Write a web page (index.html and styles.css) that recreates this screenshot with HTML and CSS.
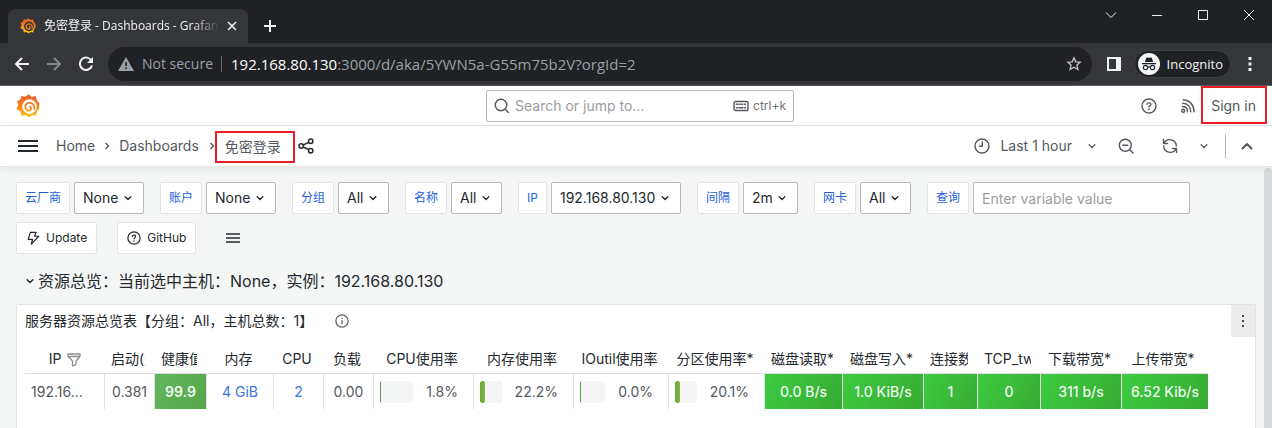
FILE: index.html
```html
<!DOCTYPE html>
<html lang="zh-CN">
<head>
<meta charset="utf-8">
<meta name="viewport" content="width=device-width, initial-scale=1">
<title>免密登录 - Dashboards - Grafana</title>
<link rel="stylesheet" href="styles.css">
</head>
<body>
<svg class="defs" aria-hidden="true">
  <defs>
    <linearGradient id="flame" x1="0" y1="0" x2="0" y2="1">
      <stop offset="0" stop-color="#f05a28"/><stop offset="0.45" stop-color="#f47b20"/><stop offset="1" stop-color="#fbca0a"/>
    </linearGradient>
    <linearGradient id="flame-curl" gradientUnits="userSpaceOnUse" x1="0" y1="4" x2="0" y2="22">
      <stop offset="0" stop-color="#f05a28"/><stop offset="1" stop-color="#fbb614"/>
    </linearGradient>
  </defs>
  <symbol id="gear" viewBox="0 0 24 24">
    <path fill="url(#flame)" d="M12.8.2 15.600 3l4.200-.9.9 4.200 2.700 3-.2 2.500-.2 3-2.200 2.500-.9 4.300-3.900-.5-3.200 2.300-3-2.400-4.100.9-.9-4.100L.3 14.900 2.400 11 .9 7.200 4.500 5.600 5.300 2 9.300 2.700z"/>
  </symbol>
  <symbol id="curl" viewBox="0 0 24 24">
    <path fill="none" stroke="url(#flame-curl)" stroke-width="1.800" stroke-linecap="round" d="M18.300 15.200C19 11.800 16.900 8.800 13.600 8.700 10.900 8.700 9.200 10.800 9.300 13c.2 2.700 2.400 4 4.200 3.600 2-.5 2.400-3.200.5-3.900"/>
  </symbol>
  <symbol id="chevron" viewBox="0 0 16 16">
    <path fill="none" stroke="currentColor" stroke-width="1.400" stroke-linecap="round" stroke-linejoin="round" d="m5.200 6.800 2.800 2.700 2.800-2.700"/>
  </symbol>
  <symbol id="question" viewBox="0 0 16 16">
    <circle cx="8" cy="8" r="7" fill="none" stroke="currentColor" stroke-width="1.400"/>
    <path fill="none" stroke="currentColor" stroke-width="1.400" stroke-linecap="round" d="M6.200 6.200c.5-2 3.800-1.700 3.700.2 0 1.300-1.900 1.300-1.900 2.500"/>
    <circle cx="8" cy="11.400" r=".9" fill="currentColor"/>
  </symbol>
</svg>

<div class="browser">
  <div class="tabstrip">
    <div class="tab">
      <svg class="favicon" viewBox="0 0 24 24"><use href="#gear"/><circle class="favicon-hole" cx="13.500" cy="12.600" r="7.300"/><use href="#curl"/></svg>
      <span class="tab-title">免密登录 - Dashboards - Grafana</span>
      <button class="tab-close" aria-label="Close tab"><svg viewBox="0 0 10 10" width="10" height="10"><path d="m1 1 8 8M9 1 1 9"/></svg></button>
    </div>
    <button class="new-tab" aria-label="New tab"><svg viewBox="0 0 12 12" width="12" height="12"><path d="M6 0v12M0 6h12"/></svg></button>
    <div class="window-buttons">
      <button aria-label="Search tabs"><svg viewBox="0 0 12 12" width="12" height="12"><path d="m1 3.500 5 5 5-5"/></svg></button>
      <button aria-label="Minimize"><svg viewBox="0 0 12 12" width="12" height="12"><path d="M1 6.500h10"/></svg></button>
      <button aria-label="Maximize"><svg viewBox="0 0 12 12" width="12" height="12"><path d="M1.500 1.500h9v9h-9z"/></svg></button>
      <button aria-label="Close"><svg viewBox="0 0 12 12" width="12" height="12"><path d="m1 1 10 10M11 1 1 11"/></svg></button>
    </div>
  </div>
  <div class="toolbar">
    <button aria-label="Back"><svg viewBox="0 0 16 16" width="16" height="16"><path d="M15 8H2M8 2 2 8l6 6"/></svg></button>
    <button class="dim" aria-label="Forward"><svg viewBox="0 0 16 16" width="16" height="16"><path d="M1 8h13M8 2l6 6-6 6"/></svg></button>
    <button class="reload" aria-label="Reload"><svg viewBox="0 0 16 16" width="16" height="16"><path d="M13.500 4.800A6.200 6.200 0 1 0 14 9.500"/><path class="solid" d="M15 1v6H9z"/></svg></button>
    <div class="omnibox">
      <svg class="warn" viewBox="0 0 16 14" width="16" height="14"><path fill="#9aa0a6" d="M8 0 16 14H0z"/><path fill="#202124" d="M7.200 5h1.600v4H7.200zM7.200 10.300h1.600V12H7.200z"/></svg>
      <span class="insecure">Not secure</span>
      <span class="url"><b>192.168.80.130</b>:3000/d/aka/5YWN5a-G55m75b2V?orgId=2</span>
      <button class="star" aria-label="Bookmark"><svg viewBox="0 0 16 16" width="16" height="16"><path d="m8 1.800 1.800 4 4.400.4-3.300 2.900 1 4.400L8 11.200l-3.900 2.300 1-4.400L1.800 6.200l4.400-.4z"/></svg></button>
    </div>
    <button class="side-panel" aria-label="Side panel"><svg viewBox="0 0 14 14" width="14" height="14"><path class="solid" fill-rule="evenodd" d="M0 0h14v14H0zM2 2v10h7V2z"/></svg></button>
    <button class="incognito">
      <svg viewBox="0 0 22 22" width="22" height="22"><circle cx="11" cy="11" r="11" fill="#f1f3f4"/><path fill="#202124" d="M7 9 8 5.300c.2-.9 1-1 1.600-.8.900.3 1.900.3 2.800 0 .6-.2 1.400-.1 1.600.8L15 9zM4 10h14v1.200H4z"/><g fill="none" stroke="#202124" stroke-width="1.100"><circle cx="7.500" cy="14.600" r="2.200"/><circle cx="14.500" cy="14.600" r="2.200"/><path d="M9.700 14.300q1.300-.8 2.600 0"/></g></svg>
      Incognito
    </button>
    <button class="menu" aria-label="Browser menu"><svg viewBox="0 0 4 14" width="4" height="14"><path class="solid" d="M.5 0h3v3h-3zM.5 5.500h3v3h-3zM.5 11h3v3h-3z"/></svg></button>
  </div>
</div>

<header class="topbar">
  <a class="logo" href="#" aria-label="Grafana"><svg viewBox="0 0 24 24" width="24" height="24"><use href="#gear"/><circle cx="13.500" cy="12.600" r="7.300" fill="#fff"/><use href="#curl"/></svg></a>
  <label class="search">
    <svg viewBox="0 0 16 16" width="16" height="16"><circle cx="7" cy="7" r="5.800"/><path d="m11.300 11.300 3.200 3.200"/></svg>
    <input type="text" placeholder="Search or jump to..." aria-label="Search or jump to">
    <svg viewBox="0 0 16 12" width="16" height="12"><rect x="1" y="1.500" width="14" height="9" rx="1.500"/><path d="M3.500 4.200h1M6 4.200h1M8.500 4.200h1M11.300 4.200h1.200M3.500 7.800h1M6 7.800h4M11.500 7.800h1"/></svg>
    <kbd>ctrl+k</kbd>
  </label>
  <div class="topbar-actions">
    <button aria-label="Help"><svg viewBox="0 0 16 16" width="16" height="16"><use href="#question"/></svg></button>
    <button aria-label="News"><svg class="line" viewBox="0 0 16 16" width="16" height="16"><circle cx="3.200" cy="12.800" r="1.500"/><path d="M2.500 8.500c3 0 5 2 5 5.200M2.800 5.200c4.700 0 8 3.600 8 8.500M3.200 2C9.700 2 14 6.800 14 13.700"/></svg></button>
    <a class="signin marked" href="#">Sign in</a>
  </div>
</header>

<nav class="crumbbar">
  <button class="burger" aria-label="Menu"><svg viewBox="0 0 20 14" width="20" height="14"><path d="M0 2h20M0 7h20M0 12h20"/></svg></button>
  <a class="crumb" href="#">Home</a>
  <svg class="sep" viewBox="0 0 6 10" width="6" height="10"><path d="m1.500 2 3 3-3 3"/></svg>
  <a class="crumb" href="#">Dashboards</a>
  <svg class="sep last" viewBox="0 0 6 10" width="6" height="10"><path d="m1.500 2 3 3-3 3"/></svg>
  <span class="current marked">免密登录</span>
  <button class="share" aria-label="Share"><svg viewBox="0 0 16 16" width="16" height="16"><circle cx="12.700" cy="3.300" r="2.200"/><circle cx="3.200" cy="8" r="2.200"/><circle cx="12.700" cy="12.700" r="2.200"/><path d="m5.200 7 5.500-2.700M5.200 9l5.500 2.700"/></svg></button>
  <div class="time-tools">
    <button class="range"><svg class="line" viewBox="0 0 16 16" width="16" height="16"><circle cx="8" cy="8" r="7"/><path d="M8.300 4v4.200H5.500"/></svg>Last 1 hour<svg viewBox="0 0 16 16" width="16" height="16"><use href="#chevron"/></svg></button>
    <button class="zoomout" aria-label="Zoom out"><svg class="line" viewBox="0 0 16 16" width="16" height="16"><circle cx="7.300" cy="7.300" r="6"/><path d="m11.800 11.800 3.200 3.200M4.800 7.300h5"/></svg></button>
    <button aria-label="Refresh"><svg class="line" viewBox="0 0 16 16" width="16" height="16"><path d="M1.500 1.500v4h4M14.500 14.500v-4h-4M2 5.300A6.500 6.500 0 0 1 14.300 8M1.700 8A6.500 6.500 0 0 0 14 10.700"/></svg></button>
    <button class="interval" aria-label="Refresh interval"><svg viewBox="0 0 16 16" width="16" height="16"><use href="#chevron"/></svg></button>
    <button class="collapse" aria-label="Collapse"><svg class="line" viewBox="0 0 16 16" width="16" height="16"><path d="m3.500 10.500 4.500-4.500 4.500 4.500"/></svg></button>
  </div>
</nav>

<main class="content">
  <form class="variables">
    <div class="variable"><label for="v1">云厂商</label><span class="pick"><select id="v1"><option>None</option></select><svg viewBox="0 0 16 16"><use href="#chevron"/></svg></span></div>
    <div class="variable"><label for="v2">账户</label><span class="pick"><select id="v2"><option>None</option></select><svg viewBox="0 0 16 16"><use href="#chevron"/></svg></span></div>
    <div class="variable"><label for="v3">分组</label><span class="pick"><select id="v3"><option>All</option></select><svg viewBox="0 0 16 16"><use href="#chevron"/></svg></span></div>
    <div class="variable"><label for="v4">名称</label><span class="pick"><select id="v4"><option>All</option></select><svg viewBox="0 0 16 16"><use href="#chevron"/></svg></span></div>
    <div class="variable"><label for="v5">IP</label><span class="pick"><select id="v5"><option>192.168.80.130</option></select><svg viewBox="0 0 16 16"><use href="#chevron"/></svg></span></div>
    <div class="variable"><label for="v6">间隔</label><span class="pick"><select id="v6"><option>2m</option></select><svg viewBox="0 0 16 16"><use href="#chevron"/></svg></span></div>
    <div class="variable"><label for="v7">网卡</label><span class="pick"><select id="v7"><option>All</option></select><svg viewBox="0 0 16 16"><use href="#chevron"/></svg></span></div>
    <div class="variable"><label for="v8">查询</label><input id="v8" type="text" placeholder="Enter variable value"></div>
  </form>
  <div class="links">
    <a href="#"><svg class="line" viewBox="0 0 16 16" width="14" height="14"><path d="M5 1.500h6.500L9.800 6h4.700L6 15l1.500-5.500H2.500z"/></svg>Update</a>
    <a href="#"><svg viewBox="0 0 16 16" width="14" height="14"><use href="#question"/></svg>GitHub</a>
    <button aria-label="Dashboard links"><svg class="line" viewBox="0 0 14 10" width="14" height="10"><path d="M0 1h14M0 5h14M0 9h14"/></svg></button>
  </div>
  <button class="row-title"><svg viewBox="0 0 16 16" width="16" height="16"><use href="#chevron"/></svg>资源总览：当前选中主机：None，实例：192.168.80.130</button>

  <section class="panel">
    <div class="panel-head">
      <h2>服务器资源总览表【分组：All，主机总数：1】</h2>
      <svg class="line info" viewBox="0 0 16 16" width="14" height="14"><circle cx="8" cy="8" r="7"/><path d="M8 7.500v3.700M8 4.600v.4"/></svg>
      <button class="panel-menu" aria-label="Panel menu"><svg viewBox="0 0 4 12" width="4" height="12"><path d="M1 0h2v2H1zM1 5h2v2H1zM1 10h2v2H1z"/></svg></button>
    </div>
    <table>
      <colgroup><col class="w80"><col class="w50"><col class="w52"><col class="w67"><col class="w50"><col class="w50"><col class="w100"><col class="w100"><col class="w95"><col class="w96"><col class="w78"><col class="w81"><col class="w54"><col class="w63"><col class="w81"><col class="w86"></colgroup>
      <thead>
        <tr>
          <th class="host-head"><div>IP <svg class="filter" viewBox="0 0 14 14" width="14" height="14"><path d="M1 1h12v2.300L9 8v3.600L5.500 13V8L1 3.300zM1.500 3.500h11"/></svg></div></th>
          <th><div>启动(天)</div></th><th><div>健康值</div></th><th><div>内存</div></th><th><div>CPU</div></th><th><div>负载</div></th>
          <th><div>CPU使用率</div></th><th><div>内存使用率</div></th><th><div>IOutil使用率</div></th><th><div>分区使用率*</div></th>
          <th><div>磁盘读取*</div></th><th><div>磁盘写入*</div></th><th><div>连接数</div></th><th><div>TCP_tw</div></th><th><div>下载带宽*</div></th><th><div>上传带宽*</div></th>
        </tr>
      </thead>
      <tbody>
        <tr>
          <td class="host">192.16...</td><td>0.381</td><td class="health">99.9</td><td><a href="#">4 GiB</a></td><td><a href="#">2</a></td><td>0.00</td>
          <td><div class="gauge"><span class="track"><span class="fill" style="width:2%"></span></span>1.8%</div></td>
          <td><div class="gauge"><span class="track"><span class="fill warm" style="width:25%"></span></span>22.2%</div></td>
          <td><div class="gauge"><span class="track"><span class="fill" style="width:0%"></span></span>0.0%</div></td>
          <td><div class="gauge"><span class="track"><span class="fill warm" style="width:21%"></span></span>20.1%</div></td>
          <td class="good">0.0 B/s</td><td class="good">1.0 KiB/s</td><td class="good">1</td><td class="good">0</td><td class="good">311 b/s</td><td class="good">6.52 Kib/s</td>
        </tr>
      </tbody>
    </table>
  </section>
  <div class="scrollbar" aria-hidden="true"></div>
</main>
</body>
</html>
```
FILE: styles.css
```css
* { box-sizing: border-box; }

body {
  margin: 0;
  height: 100vh;
  display: flex;
  flex-direction: column;
  overflow: hidden;
  background: #f4f5f5;
  color: #24292e;
  font: 14px/20px Inter, "Noto Sans CJK SC", sans-serif;
}

button, input, select { font: inherit; color: inherit; }
button { display: flex; align-items: center; justify-content: center; padding: 0; border: 0; background: none; }
a { color: inherit; text-decoration: none; }
svg { flex: none; display: block; }
.defs { position: absolute; width: 0; height: 0; }
.line { fill: none; stroke: currentColor; stroke-width: 1.4; stroke-linecap: round; stroke-linejoin: round; }

/* Browser frame */
.browser { flex: none; background: #202124; color: #f1f3f4; font-family: "Open Sans", "Noto Sans CJK SC", sans-serif; }
.browser button svg { fill: none; stroke: currentColor; }
.browser .solid { fill: currentColor; stroke: none; }
.tabstrip { display: flex; align-items: flex-start; height: 43px; padding-left: 8px; }
.tab { display: flex; align-items: center; width: 240px; height: 34px; margin-top: 9px; padding: 0 11px 0 12px; border-radius: 8px 8px 0 0; background: #35363a; font-size: 12px; }
.favicon { width: 16px; height: 16px; margin-right: 8px; }
.favicon-hole { fill: #35363a; }
.tab-title { flex: 1; overflow: hidden; white-space: nowrap; mask-image: linear-gradient(to right, #000 85%, transparent); }
.tab-close { width: 10px; margin-left: 8px; stroke-width: 1.5; }
.new-tab { height: 34px; margin: 9px 0 0 16px; stroke-width: 2; }
.window-buttons { display: flex; margin-left: auto; }
.window-buttons button { width: 46px; height: 30px; }
.toolbar { display: flex; align-items: center; height: 43px; padding: 0 20px 0 14px; border-bottom: 1px solid #5b5c60; background: #35363a; }
.toolbar > button { width: 16px; margin-right: 16px; stroke-width: 2; }
.toolbar > .dim { color: #85868a; }
.toolbar > .reload { margin-right: 14px; }
.omnibox { flex: 1; display: flex; align-items: center; height: 34px; margin-right: 14px; padding: 0 10px; border-radius: 17px; background: #202124; color: #9aa0a6; font-size: 15px; }
.insecure { margin: 0 8px; font-size: 14px; }
.url { padding-left: 9px; border-left: 1px solid #6b6e72; line-height: 16px; }
.url b { color: #fff; font-weight: 400; }
.star { margin-left: auto; color: #c3c5c8; stroke-width: 1.3; }
.toolbar > .side-panel { margin-right: 12px; }
.toolbar > .incognito { width: auto; gap: 7px; height: 28px; margin-right: 17px; padding: 0 7px 0 3px; border-radius: 14px; border: 1px solid #3f4044; background: #202124; font-size: 13px; }
.browser .incognito svg { stroke: none; }
.toolbar > .menu { width: 4px; margin-right: 0; }

/* Grafana top bar */
.topbar, .crumbbar { flex: none; display: flex; align-items: center; background: #fff; color: #55595e; }
.topbar { display: grid; grid-template-columns: 1fr 308px 1fr; height: 40px; padding: 0 5px 0 13px; border-bottom: 1px solid #e4e5e6; }
.logo { margin-left: 3px; }
.search { display: flex; align-items: center; height: 32px; padding: 0 7px; border: 1px solid #b9babb; border-radius: 2px; }
.search svg { fill: none; stroke: currentColor; stroke-width: 1.4; stroke-linecap: round; }
.search input { flex: 1; min-width: 0; padding: 0 5px; border: 0; outline: 0; background: none; }
input::placeholder { color: #9a9da0; opacity: 1; }
.search kbd { margin-left: 4px; font: 12px/20px Inter, sans-serif; color: #6f7377; }
.topbar-actions { display: flex; align-items: flex-start; justify-content: flex-end; height: 39px; }
.topbar-actions button { height: 39px; margin-right: 23px; }
.topbar-actions button + button { margin-right: 5px; }
.marked { border: 2px solid #ec1c24; }
.signin { height: 38px; padding: 9px 9px 0 8px; line-height: 18px; }

/* Breadcrumbs and time controls */
.crumbbar { height: 41px; padding: 0 17px 0 18px; border-bottom: 1px solid #e4e5e6; box-shadow: 0 2px 6px #18191a14; z-index: 1; }
.burger { margin-right: 18px; color: #24292e; }
.burger path { stroke: currentColor; stroke-width: 2; }
.sep { margin: 0 9px; fill: none; stroke: currentColor; stroke-width: 1.4; }
.sep.last { margin-right: 0; margin-left: 10px; }
.current { margin-top: 2px; padding: 4px 12px 4px 8px; }
.share { margin-left: 3px; color: #24292e; }
.share svg { fill: none; stroke: currentColor; stroke-width: 1.5; }
.time-tools { display: flex; align-items: center; margin-left: auto; }
.range svg:first-child { margin-right: 10px; }
.range svg:last-child { margin-left: 12px; }
.zoomout { margin: 0 28px 0 18px; }
.interval { margin: 0 13px 0 18px; }
.collapse { height: 24px; padding-left: 13px; border-left: 1px solid #b9babb; }
.collapse svg { stroke-width: 2; }

/* Dashboard */
.content { flex: 1; min-height: 0; display: flex; flex-direction: column; position: relative; padding: 15px 16px 0; }
.variables { display: flex; flex-wrap: wrap; gap: 8px 16px; }
.variable { display: flex; gap: 4px; }
.variable label { height: 32px; padding: 0 8px; border: 1px solid #e2e3e3; border-radius: 2px; background: #fff; color: #1f62e0; font-size: 12px; line-height: 30px; }
.pick { position: relative; display: flex; }
.pick select { appearance: none; height: 32px; padding: 0 24px 0 8px; border: 1px solid #b9babb; border-radius: 2px; background: #fff; }
.pick svg { position: absolute; right: 8px; top: 8px; width: 16px; height: 16px; pointer-events: none; }
.variable input { width: 217px; height: 32px; padding: 0 8px; border: 1px solid #b9babb; border-radius: 2px; background: #fff; }
.links { display: flex; gap: 20px; margin-top: 8px; font-size: 12px; }
.links a { display: flex; align-items: center; gap: 6px; height: 32px; padding: 0 9px; border: 1px solid #e2e3e3; border-radius: 2px; background: #fff; }
.links button { margin-left: 10px; }
.row-title { align-self: flex-start; height: 30px; margin: 12px 0 8px 6px; font-size: 16px; }
.panel { flex: 1; min-height: 0; overflow: hidden; border: 1px solid #e2e3e3; border-bottom: 0; border-radius: 2px 2px 0 0; background: #fff; }
.panel-head { display: flex; align-items: center; height: 32px; padding-left: 8px; }
.panel-head h2 { margin: 0; font-size: 14px; font-weight: 400; }
.info { margin-left: 22px; color: #55595e; }
.panel-menu { width: 24px; height: 32px; margin-left: auto; background: #ececec; }
.panel-menu path { fill: #45494e; }
table { table-layout: fixed; width: 1183px; margin: 8px; border-collapse: separate; border-spacing: 0; }
.w50 { width: 50px; } .w52 { width: 52px; } .w54 { width: 54px; } .w63 { width: 63px; }
.w67 { width: 67px; } .w78 { width: 78px; } .w80 { width: 80px; } .w81 { width: 81px; }
.w86 { width: 86px; } .w95 { width: 95px; } .w96 { width: 96px; } .w100 { width: 100px; }
th { height: 29px; padding: 0 10px 0 6px; border-bottom: 1px solid #e0e0e1; font-weight: 400; }
th.host-head { padding: 0 6px; }
th div { overflow: hidden; white-space: nowrap; }
.filter { display: inline-block; margin-left: 2px; vertical-align: -3px; fill: none; stroke: #8a8d90; stroke-width: 1.3; stroke-linejoin: round; }
td { height: 35px; padding: 0; border-right: 1px solid #e0e0e1; text-align: center; color: #55595e; white-space: nowrap; }
td a { color: #3b76dc; }
td.host { padding-left: 6px; text-align: left; }
td:last-child { border-right: 0; }
td.health, td.good { color: #eef8ed; font-weight: 500; }
td.health { font-weight: 600; }
.health { background: linear-gradient(120deg, #62b65c, #56a64b) padding-box; }
.good { background: linear-gradient(120deg, #3dcb42, #37ab33) padding-box; }
.gauge { display: flex; align-items: center; gap: 13px; padding: 0 15px 0 6px; }
.track { flex: 1; height: 22px; border-radius: 2px; overflow: hidden; background: #f4f5f5; }
.fill { display: block; height: 100%; min-width: 1px; background: #56a64b; }
.fill.warm { border-radius: 2px; background: linear-gradient(to right, #5fa843, #90b136); }
.scrollbar { position: absolute; top: 1px; right: 0; bottom: 0; width: 8px; border-radius: 4px 4px 0 0; background: #d9dadb; }
```
